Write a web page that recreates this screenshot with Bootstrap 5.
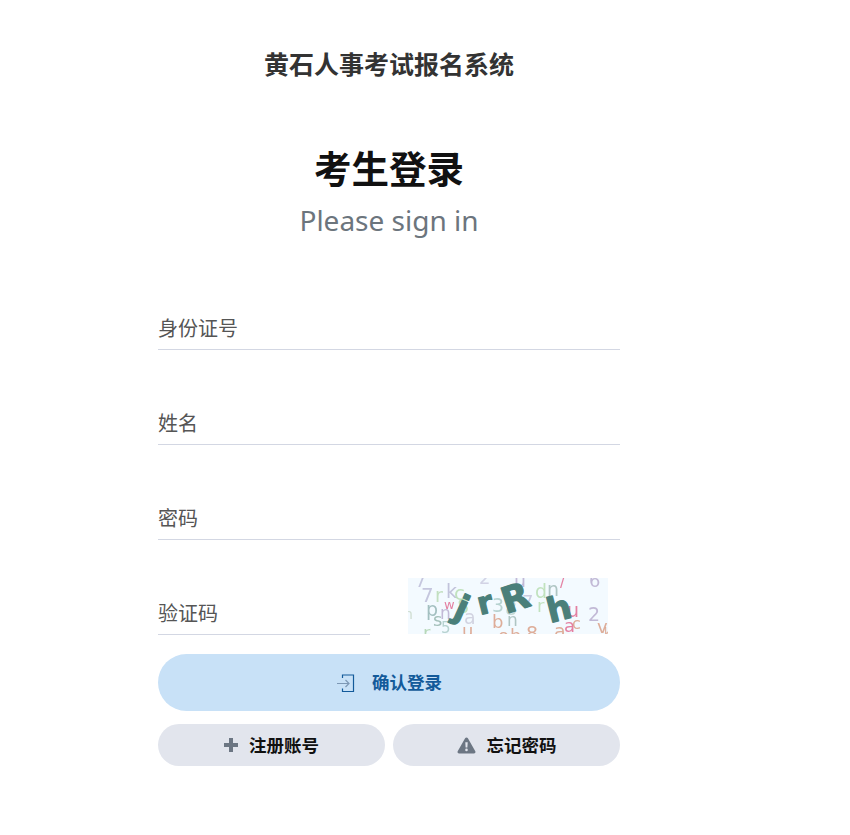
<!doctype html>
<html lang="zh-CN">
<head>
<meta charset="utf-8">
<title>考生登录</title>
<link rel="stylesheet" href="https://cdn.jsdelivr.net/npm/bootstrap@5.3.0/dist/css/bootstrap.min.css">
<style>
html,body{height:835px;overflow:hidden;background:#fff}
body{font-family:"Noto Sans","Noto Sans CJK SC",sans-serif}
.login-shell{width:778px;padding:0 158px}
.sys-title{font-size:25px;line-height:36px;font-weight:700;color:#333;margin:46px 0 0;text-align:center;white-space:nowrap}
.login-h{font-size:37.5px;line-height:52px;font-weight:700;color:#111;margin:61px 0 0;text-align:center}
.login-sub{font-size:28px;line-height:40px;color:#6c757d;margin:5px 0 0;text-align:center;font-weight:400}
.login-form{margin-top:15px}
.field-row{height:95px;display:flex;align-items:flex-end;justify-content:space-between}
.under-input{border:0;border-bottom:1px solid #d3d7e3;border-radius:0;padding:0 0 2px;height:41px;line-height:38px;font-size:20px;color:#555;width:100%;background:transparent;outline:0;box-shadow:none;font-family:inherit}
.under-input::placeholder{color:#555;opacity:1}
.code-input{width:212px;flex:none}
.captcha{width:200px;height:56px;display:block;margin:0 12px 1px 0;flex:none}
.captcha text{font-family:"DejaVu Sans",sans-serif}
.noise{filter:blur(.35px)}
.big-letters{stroke:#4a7f7a;stroke-width:1.2px;stroke-linejoin:round}
.btn-main{display:flex;width:100%;height:57px;margin-top:19px;border:0;border-radius:29px;background:#c8e1f7;color:#135a9a;font-size:17.5px;font-weight:700;align-items:center;justify-content:center;gap:16px;padding:0}
.btn-main:hover,.btn-main:active{background:#c8e1f7!important;color:#135a9a!important}
.btn-pair{display:flex;gap:8px;margin-top:13px}
.btn-soft{flex:1 1 0;height:42px;border:0;border-radius:21px;background:#e2e5ed;color:#111;font-size:17.5px;font-weight:700;display:flex;align-items:center;justify-content:center;gap:11px;padding:0}
.btn-soft:hover{background:#e2e5ed;color:#111}
</style>
</head>
<body class="m-0">
<div class="login-shell">
  <div class="sys-title">黄石人事考试报名系统</div>
  <h1 class="login-h">考生登录</h1>
  <h2 class="login-sub">Please sign in</h2>
  <form class="login-form" onsubmit="return false">
    <div class="field-row"><input class="form-control under-input" placeholder="身份证号"></div>
    <div class="field-row"><input class="form-control under-input" placeholder="姓名"></div>
    <div class="field-row"><input class="form-control under-input" placeholder="密码"></div>
    <div class="field-row">
      <input class="form-control under-input code-input" placeholder="验证码">
      <svg class="captcha" viewBox="0 0 200 56" aria-label="验证码图片">
        <rect width="200" height="56" fill="#f3faff"/>
        <g class="noise" font-size="18" fill-opacity=".8">
          <text x="7" y="9" fill="#b9b9d6">7</text>
          <text x="13" y="24" font-size="20" fill="#b9b9d6">7</text>
          <text x="27" y="24" font-size="19" fill="#b5d8b0">r</text>
          <text x="38" y="20" font-size="19" fill="#b5b5d2">k</text>
          <text x="46" y="22" font-size="20" fill="#b4dcae">c</text>
          <text x="36" y="31" font-size="13" fill="#e0608a">w</text>
          <text x="49" y="35" font-size="19" fill="#b4dcae">8</text>
          <text x="71" y="6" fill="#c9c9de">2</text>
          <text x="106" y="9" font-size="19" fill="#b5a9cc">u</text>
          <text x="127" y="20" font-size="19" fill="#b4dcae">d</text>
          <text x="139" y="18" font-size="19" fill="#9db8b4">n</text>
          <text x="152" y="9" font-size="15" fill="#e0608a">/</text>
          <text x="181" y="9" font-size="18" fill="#b5a9cc">6</text>
          <text x="-4" y="41" font-size="14" fill="#c5d6c5">n</text>
          <text x="18" y="38" font-size="19" fill="#8fb0b0">p</text>
          <text x="25" y="48" font-size="18" fill="#8fb0a8">s</text>
          <text x="32" y="41" font-size="17" fill="#b5a9cc">n</text>
          <text x="56" y="46" font-size="19" fill="#c9c9d9">a</text>
          <text x="84" y="34" font-size="19" fill="#a8c8c4">3</text>
          <text x="97" y="37" font-size="19" fill="#b8d0c8">8</text>
          <text x="114" y="30" font-size="18" fill="#c0c0d8">7</text>
          <text x="129" y="34" font-size="18" fill="#b4dcae">r</text>
          <text x="84" y="50" font-size="18" fill="#d89a80">b</text>
          <text x="99" y="48" font-size="17" fill="#9db8b4">n</text>
          <text x="15" y="61" font-size="18" fill="#a8cfa8">r</text>
          <text x="33" y="55" font-size="15" fill="#a8c8c4">5</text>
          <text x="54" y="59" font-size="18" fill="#d89a80">u</text>
          <text x="90" y="64" font-size="18" fill="#d89a80">o</text>
          <text x="102" y="64" font-size="18" fill="#d89a80">b</text>
          <text x="118" y="62" font-size="19" fill="#d89a80">8</text>
          <text x="146" y="60" font-size="19" fill="#d89a80">a</text>
          <text x="156" y="54" font-size="18" fill="#e0608a">a</text>
          <text x="164" y="51" font-size="16" fill="#d89a80">c</text>
          <text x="159" y="39" font-size="19" fill="#e0608a">u</text>
          <text x="180" y="43" font-size="19" fill="#b5a9cc">2</text>
          <text x="189" y="55" font-size="18" fill="#d89a80">v</text>
          <text x="196" y="59" font-size="12" fill="#d89a80">k</text>
        </g>
        <g class="big-letters" font-weight="700" fill="#4a7f7a">
          <text font-size="34" transform="translate(44 38) rotate(24)">j</text>
          <text font-size="31" transform="translate(72 37) rotate(-14)">r</text>
          <text font-size="36" transform="translate(98 36) rotate(-18)">R</text>
          <text font-size="34" transform="translate(142 45) rotate(-14)">h</text>
        </g>
      </svg>
    </div>
    <button class="btn btn-main" type="button">
      <svg width="20" height="20" viewBox="0 0 20 20" fill="none" aria-hidden="true"><path d="M6.5 5V2H17.5V18.5H6.5V15.5" stroke="#135a9a" stroke-width="1.2"/><path d="M1 10.5H13M9.5 7L13 10.5L9.5 14" stroke="#7d98b5" stroke-width="1.2"/></svg>
      <span>确认登录</span>
    </button>
    <div class="btn-pair">
      <button class="btn btn-soft" type="button">
        <svg width="14" height="14" viewBox="0 0 14 14" aria-hidden="true"><path d="M5 0H9V5H14V9H9V14H5V9H0V5H5Z" fill="#6c7683"/></svg>
        <span>注册账号</span>
      </button>
      <button class="btn btn-soft" type="button">
        <svg width="19" height="17" viewBox="0 0 19 17" aria-hidden="true"><path fill-rule="evenodd" d="M9.5 0.5C10.1 0.5 10.6 0.8 10.9 1.3L18.3 14.2C18.9 15.3 18.1 16.5 16.9 16.5H2.1C0.9 16.5 0.1 15.3 0.7 14.2L8.1 1.3C8.4 0.8 8.9 0.5 9.5 0.5ZM8.3 5.2L8.6 10.6H10.4L10.7 5.2ZM9.5 11.6A1.3 1.3 0 1 0 9.5 14.2A1.3 1.3 0 1 0 9.5 11.6Z" fill="#6c7683"/></svg>
        <span>忘记密码</span>
      </button>
    </div>
  </form>
</div>
<script src="https://cdn.jsdelivr.net/npm/bootstrap@5.3.0/dist/js/bootstrap.bundle.min.js"></script>
</body>
</html>
